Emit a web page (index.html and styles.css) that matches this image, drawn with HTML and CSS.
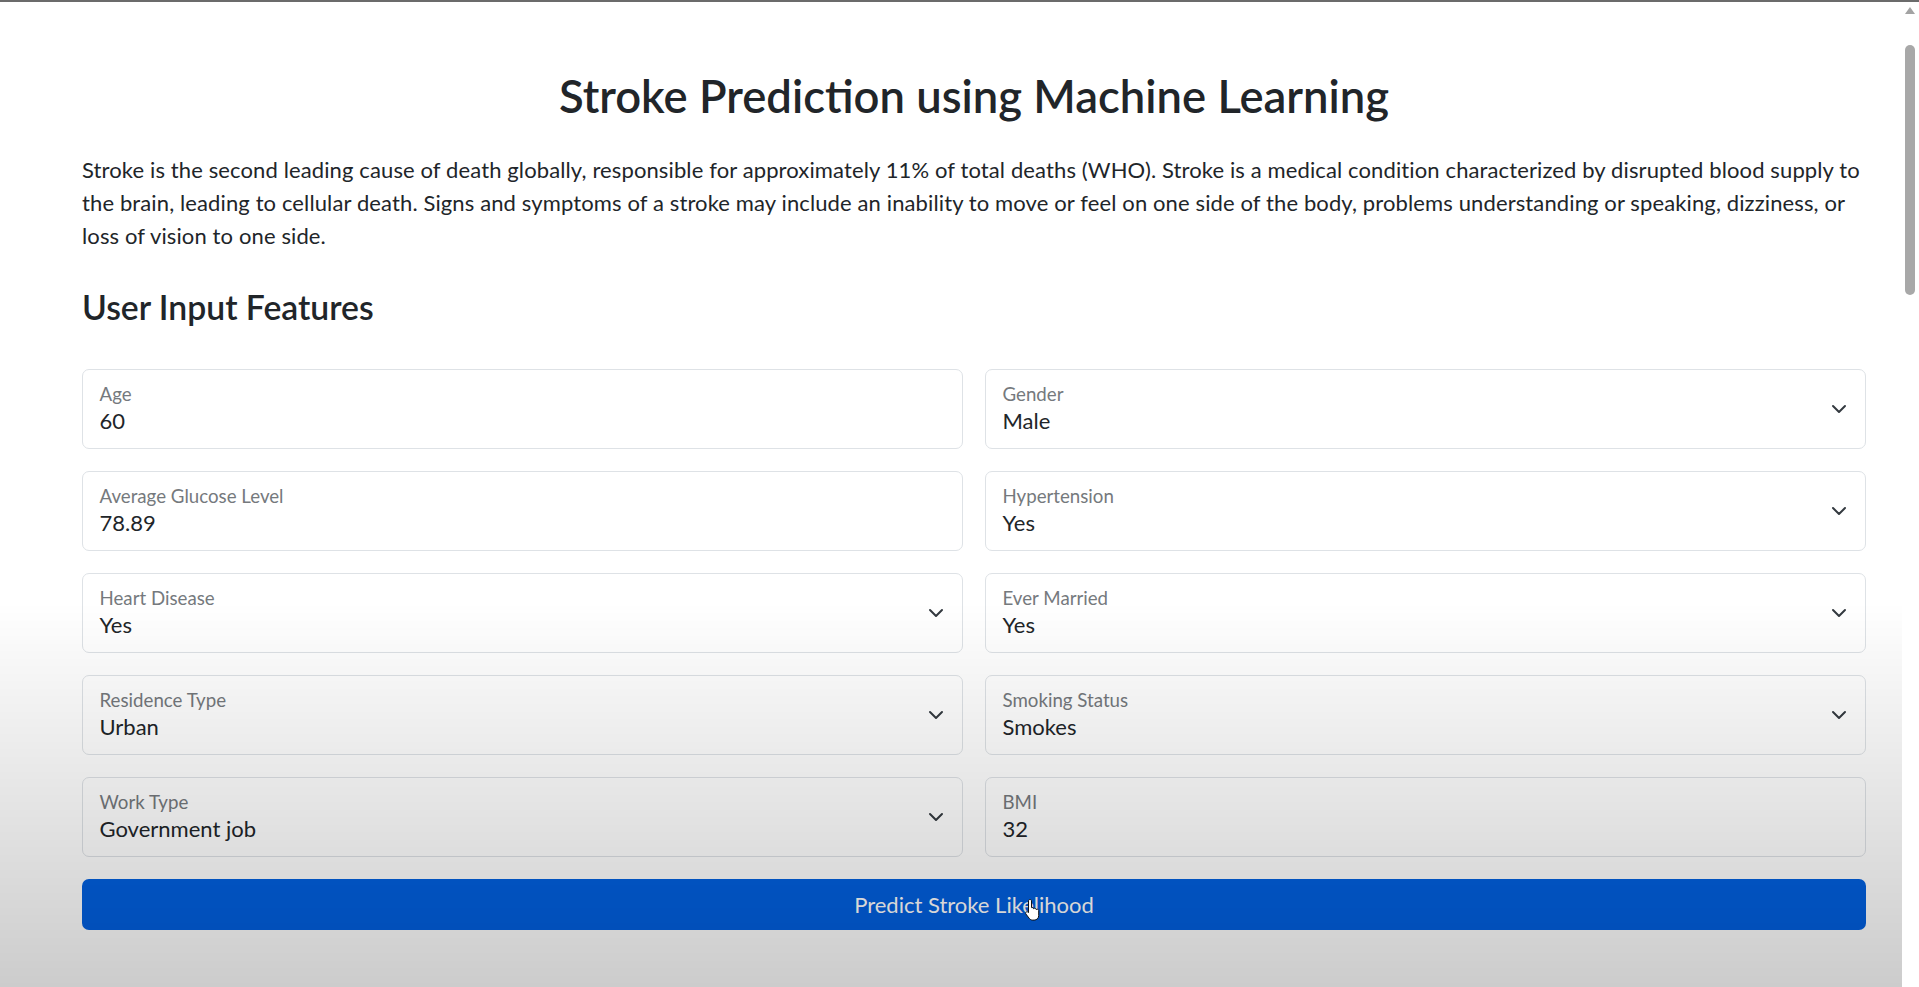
FILE: index.html
```html
<!DOCTYPE html>
<html lang="en">
<head>
<meta charset="utf-8">
<title>Stroke Prediction using Machine Learning</title>
<link rel="stylesheet" href="styles.css">
</head>
<body>
<main class="page">
  <h1 class="title">Stroke Prediction using Machine Learning</h1>
  <p class="intro">Stroke is the second leading cause of death globally, responsible for approximately 11% of total deaths (WHO). Stroke is a medical condition characterized by disrupted blood supply to<br>the brain, leading to cellular death. Signs and symptoms of a stroke may include an inability to move or feel on one side of the body, problems understanding or speaking, dizziness, or<br>loss of vision to one side.</p>
  <h2 class="section-title">User Input Features</h2>
  <form class="form">
    <div class="field">
      <div class="field-body"><span class="label">Age</span><span class="value">60</span></div>
    </div>
    <div class="field">
      <div class="field-body"><span class="label">Gender</span><span class="value">Male</span></div>
      <svg class="chev" viewBox="0 0 16 16"><path d="m2 5 6 6 6-6" fill="none" stroke="#343a40" stroke-width="2" stroke-linecap="round" stroke-linejoin="round"/></svg>
    </div>
    <div class="field">
      <div class="field-body"><span class="label">Average Glucose Level</span><span class="value">78.89</span></div>
    </div>
    <div class="field">
      <div class="field-body"><span class="label">Hypertension</span><span class="value">Yes</span></div>
      <svg class="chev" viewBox="0 0 16 16"><path d="m2 5 6 6 6-6" fill="none" stroke="#343a40" stroke-width="2" stroke-linecap="round" stroke-linejoin="round"/></svg>
    </div>
    <div class="field">
      <div class="field-body"><span class="label">Heart Disease</span><span class="value">Yes</span></div>
      <svg class="chev" viewBox="0 0 16 16"><path d="m2 5 6 6 6-6" fill="none" stroke="#343a40" stroke-width="2" stroke-linecap="round" stroke-linejoin="round"/></svg>
    </div>
    <div class="field">
      <div class="field-body"><span class="label">Ever Married</span><span class="value">Yes</span></div>
      <svg class="chev" viewBox="0 0 16 16"><path d="m2 5 6 6 6-6" fill="none" stroke="#343a40" stroke-width="2" stroke-linecap="round" stroke-linejoin="round"/></svg>
    </div>
    <div class="field">
      <div class="field-body"><span class="label">Residence Type</span><span class="value">Urban</span></div>
      <svg class="chev" viewBox="0 0 16 16"><path d="m2 5 6 6 6-6" fill="none" stroke="#343a40" stroke-width="2" stroke-linecap="round" stroke-linejoin="round"/></svg>
    </div>
    <div class="field">
      <div class="field-body"><span class="label">Smoking Status</span><span class="value">Smokes</span></div>
      <svg class="chev" viewBox="0 0 16 16"><path d="m2 5 6 6 6-6" fill="none" stroke="#343a40" stroke-width="2" stroke-linecap="round" stroke-linejoin="round"/></svg>
    </div>
    <div class="field">
      <div class="field-body"><span class="label">Work Type</span><span class="value">Government job</span></div>
      <svg class="chev" viewBox="0 0 16 16"><path d="m2 5 6 6 6-6" fill="none" stroke="#343a40" stroke-width="2" stroke-linecap="round" stroke-linejoin="round"/></svg>
    </div>
    <div class="field">
      <div class="field-body"><span class="label">BMI</span><span class="value">32</span></div>
    </div>
    <button type="button" class="predict">Predict Stroke Likelihood</button>
  </form>
</main>
<div class="shade"></div>
<div class="scrollbar"><span class="arrow"></span><span class="thumb"></span></div>
<svg class="cursor" viewBox="0 0 18 26"><path d="M6 1.5c.9 0 1.5.6 1.5 1.5v6.6c.2-.1.4-.1.6-.1.8 0 1.4.5 1.5 1.2.3-.3.7-.4 1.1-.4.8 0 1.4.5 1.5 1.2.3-.2.6-.3 1-.3.9 0 1.5.7 1.5 1.5v4.9c0 2.6-2 4.5-4.5 4.5H8.6c-1.4 0-2.6-.7-3.4-1.8L1.9 16c-.5-.7-.3-1.6.4-2 .6-.4 1.4-.3 1.9.3l.3.4V3c0-.9.6-1.5 1.5-1.5z" fill="#fff" stroke="#111" stroke-width="1"/></svg>
</body>
</html>
```
FILE: styles.css
```css
html {
  background: #ffffff;
}

body {
  margin: 0;
  border-top: 2px solid #6b6b6b;
  background: #ffffff;
  font-family: Lato, "Noto Sans", sans-serif;
  color: #212529;
  min-height: 985px;
}

.page {
  width: 1784px;
  margin-left: 82px;
  padding-top: 67px;
}

.title {
  font-size: 45.4px;
  font-weight: 600;
  line-height: 54px;
  text-align: center;
  margin: 0 0 30px;
}

.intro {
  font-size: 22px;
  line-height: 33px;
  letter-spacing: 0.12px;
  white-space: nowrap;
  margin: 0 0 35px;
}

.section-title {
  font-size: 33.7px;
  font-weight: 600;
  line-height: 40px;
  margin: 0 0 42px;
}

.form {
  display: grid;
  grid-template-columns: 1fr 1fr;
  gap: 22px;
}

.field {
  height: 80px;
  box-sizing: border-box;
  border: 1px solid #dee2e6;
  border-radius: 7px;
  background: #ffffff;
  display: flex;
  align-items: center;
  padding: 0 18.5px 0 16.5px;
}

.field-body {
  align-self: flex-start;
  flex: 1;
  display: flex;
  flex-direction: column;
  padding-top: 13px;
}

.label {
  font-size: 18.7px;
  line-height: 22px;
  color: #75797d;
}

.value {
  font-size: 22px;
  line-height: 28px;
  margin-top: 1.5px;
  color: #212529;
}

.chev {
  width: 16px;
  height: 16px;
  flex: none;
}

.predict {
  grid-column: 1 / -1;
  height: 51px;
  border: 0;
  border-radius: 7px;
  background: #0260e0;
  color: #ffffff;
  font-family: Lato, "Noto Sans", sans-serif;
  font-size: 22px;
  cursor: pointer;
}

.shade {
  position: fixed;
  inset: 0;
  pointer-events: none;
  background: linear-gradient(180deg, rgba(0, 0, 0, 0) 0%, rgba(0, 0, 0, 0) 61%, rgba(0, 0, 0, 0.2) 100%);
}

.scrollbar {
  position: fixed;
  top: 2px;
  right: 0;
  bottom: 0;
  width: 17px;
  background: #ffffff;
}

.arrow {
  position: absolute;
  top: 5px;
  left: 3px;
  width: 0;
  height: 0;
  border-left: 5px solid transparent;
  border-right: 5px solid transparent;
  border-bottom: 7px solid #a3a3a3;
}

.thumb {
  position: absolute;
  top: 43px;
  left: 3px;
  width: 10px;
  height: 250px;
  border-radius: 5px;
  background: #a8a8a8;
}

.cursor {
  position: fixed;
  left: 1024px;
  top: 898px;
  width: 18px;
  height: 26px;
}
```
